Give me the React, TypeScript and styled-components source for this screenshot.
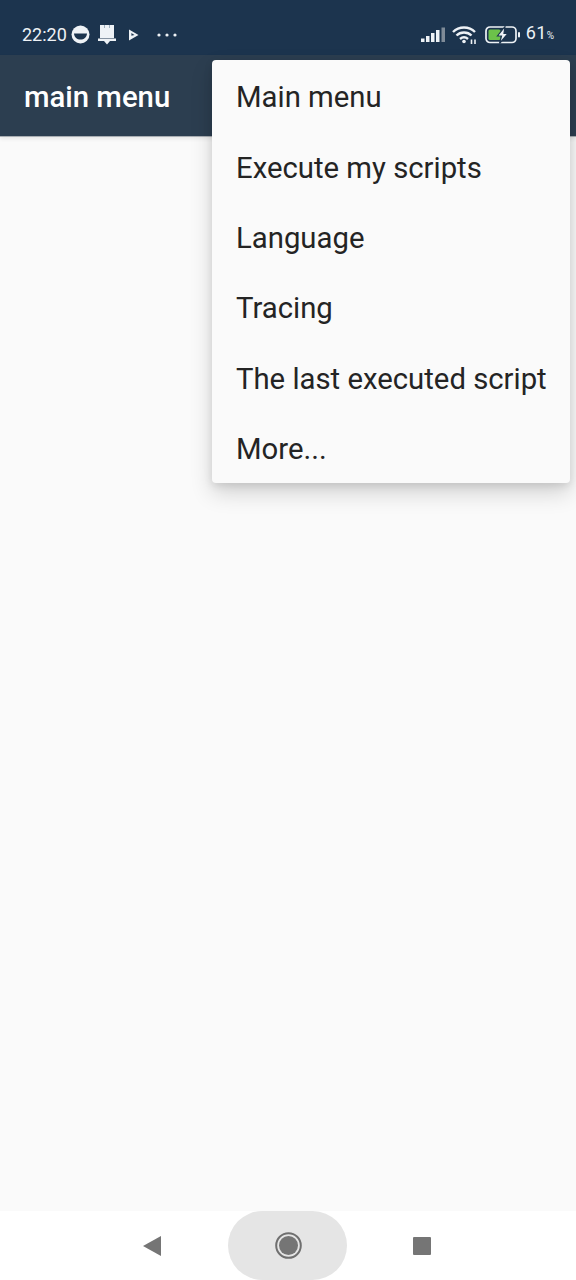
import { FunctionComponent } from "react";
import styled, { createGlobalStyle } from "styled-components";

const GlobalStyle = createGlobalStyle`
  html, body {
    margin: 0;
    padding: 0;
    background: #fafafa;
  }
  * {
    box-sizing: border-box;
  }
`;

const Screen = styled.div`
  position: relative;
  width: 576px;
  height: 1280px;
  display: flex;
  flex-direction: column;
  overflow: hidden;
  background: #fafafa;
  font-family: Roboto, "Noto Sans", sans-serif;
`;
const StatusBar = styled.div`
  height: 55px;
  flex-shrink: 0;
  display: flex;
  align-items: center;
  justify-content: space-between;
  padding: 14px 22px 0 22px;
  background: #1c344e;
  color: #eef2f6;
`;
const StatusGroup = styled.div`
  display: flex;
  align-items: center;
`;
const Time = styled.span`
  font-size: 18px;
  line-height: 24px;
  margin-right: 4px;
`;
const Percent = styled.span`
  font-size: 18px;
  line-height: 24px;
  letter-spacing: 0.4px;
  margin-left: 5px;
  small {
    font-size: 10px;
    letter-spacing: 0;
  }
`;
const AppBar = styled.header`
  height: 82px;
  flex-shrink: 0;
  display: flex;
  align-items: center;
  padding: 3px 24px 0;
  background: #2c3e50;
  border-bottom: 1px solid #a9aeb3;
  box-shadow: 0 2px 4px rgba(0, 0, 0, 0.08);
`;
const Title = styled.h1`
  margin: 0;
  font-size: 29.3px;
  font-weight: 500;
  line-height: 34px;
  color: #ffffff;
`;
const Content = styled.main`
  flex: 1;
`;
const NavBar = styled.nav`
  height: 69px;
  flex-shrink: 0;
  display: flex;
  align-items: center;
  justify-content: center;
  padding-right: 1px;
  background: #ffffff;
`;
const NavButton = styled.div<{ $active?: boolean }>`
  width: 119px;
  height: 69px;
  display: flex;
  align-items: center;
  justify-content: center;
  border-radius: 35px;
  margin: 0 8px;
  padding: ${(p) => (p.$active ? "0 0 0 2px" : "0 2px 0 0")};
  background: ${(p) => (p.$active ? "#e5e5e5" : "transparent")};
`;
const Menu = styled.ul`
  position: absolute;
  top: 60px;
  left: 212px;
  width: 358px;
  height: 423px;
  margin: 0;
  padding: 2px 0 0;
  list-style: none;
  background: #fafafa;
  border-radius: 4px;
  box-shadow: 0 10px 22px rgba(0, 0, 0, 0.16), 0 3px 8px rgba(0, 0, 0, 0.1);
`;
const MenuItem = styled.li`
  height: 70.4px;
  display: flex;
  align-items: center;
  padding: 0 24px;
  font-size: 29.3px;
  color: #242424;
  white-space: nowrap;
`;

const items = [
  "Main menu",
  "Execute my scripts",
  "Language",
  "Tracing",
  "The last executed script",
  "More...",
];

const App: FunctionComponent = () => {
  return (
    <Screen>
      <GlobalStyle />
      <StatusBar>
        <StatusGroup>
          <Time>22:20</Time>
          <svg width="19" height="19" viewBox="0 0 19 19">
            <circle cx="9.5" cy="9.5" r="9" fill="#eef2f6" />
            <path d="M3 8.5 H16 C15.5 12.5 13 14.5 9.5 14.5 C6 14.5 3.5 12.5 3 8.5 Z" fill="#1c344e" />
          </svg>
          <svg width="18" height="20" viewBox="0 0 18 20" style={{ marginLeft: 8 }}>
            <path d="M2 0 H16 V13 H2 Z" fill="#eef2f6" />
            <path d="M0 13.5 H18 V16 H0 Z M6 16 H12 L9 19.5 Z" fill="#eef2f6" />
            <path d="M6 0 H7 V3 H6 Z M11 0 H12 V3 H11 Z" fill="#9fb0c0" />
          </svg>
          <svg width="11" height="12" viewBox="0 0 11 12" style={{ marginLeft: 12 }}>
            <path d="M1 0.5 L10.5 6 L1 11.5 Z M3.4 4 V6.8 L6.5 6 Z" fill="#eef2f6" fillRule="evenodd" />
          </svg>
          <svg width="20" height="4" viewBox="0 0 20 4" style={{ marginLeft: 18 }}>
            <circle cx="2" cy="2" r="1.6" fill="#eef2f6" />
            <circle cx="10" cy="2" r="1.6" fill="#eef2f6" />
            <circle cx="18" cy="2" r="1.6" fill="#eef2f6" />
          </svg>
        </StatusGroup>
        <StatusGroup>
          <svg width="25" height="16" viewBox="0 0 25 16">
            <rect x="0" y="11.5" width="3.5" height="3.5" fill="#eef2f6" />
            <rect x="5" y="9" width="3.5" height="6" fill="#eef2f6" />
            <rect x="10" y="6" width="3.5" height="9" fill="#eef2f6" />
            <rect x="15" y="3" width="3.5" height="12" fill="#eef2f6" />
            <rect x="20.5" y="0.5" width="3.5" height="14.5" fill="#7f8b98" />
          </svg>
          <svg width="26" height="20" viewBox="0 0 26 20" style={{ marginLeft: 6 }} fill="none" stroke="#eef2f6" strokeWidth="2.4">
            <path d="M1 7 C7 1 17 1 23 7" />
            <path d="M4.5 10.5 C8.5 6.5 15.5 6.5 19.5 10.5" />
            <path d="M8 14 C10.5 11.8 13.5 11.8 16 14" />
            <circle cx="12" cy="16.5" r="1.8" fill="#eef2f6" stroke="none" />
            <path d="M19.5 19 V14.5 M23 19 V14.5" strokeWidth="1.6" />
          </svg>
          <svg width="36" height="18" viewBox="0 0 36 18" style={{ marginLeft: 7 }}>
            <rect x="1" y="1" width="30" height="15.5" rx="4" fill="none" stroke="#eef2f6" strokeWidth="1.7" />
            <rect x="3.5" y="3.5" width="12" height="10.5" rx="1.5" fill="#6cc24a" />
            <path d="M20 0.5 L12.5 10 H16.5 L14.5 17.5 L23 7.5 H19 Z" fill="#eef2f6" stroke="#1c344e" strokeWidth="1.2" />
            <rect x="33" y="6" width="2" height="5.5" rx="1" fill="#eef2f6" />
          </svg>
          <Percent>
            61<small>%</small>
          </Percent>
        </StatusGroup>
      </StatusBar>
      <AppBar>
        <Title>main menu</Title>
      </AppBar>
      <Content />
      <NavBar>
        <NavButton>
          <svg width="18" height="20" viewBox="0 0 18 20">
            <path d="M18 0 V20 L0 10 Z" fill="#757575" />
          </svg>
        </NavButton>
        <NavButton $active>
          <svg width="27" height="27" viewBox="0 0 27 27">
            <circle cx="13.5" cy="13.5" r="12.3" fill="none" stroke="#6f6f6f" strokeWidth="2" />
            <circle cx="13.5" cy="13.5" r="9.5" fill="#757575" />
          </svg>
        </NavButton>
        <NavButton>
          <svg width="18" height="18" viewBox="0 0 18 18">
            <rect width="18" height="18" rx="1" fill="#757575" />
          </svg>
        </NavButton>
      </NavBar>
      <Menu>
        {items.map((item) => (
          <MenuItem key={item}>{item}</MenuItem>
        ))}
      </Menu>
    </Screen>
  );
};

export default App;
